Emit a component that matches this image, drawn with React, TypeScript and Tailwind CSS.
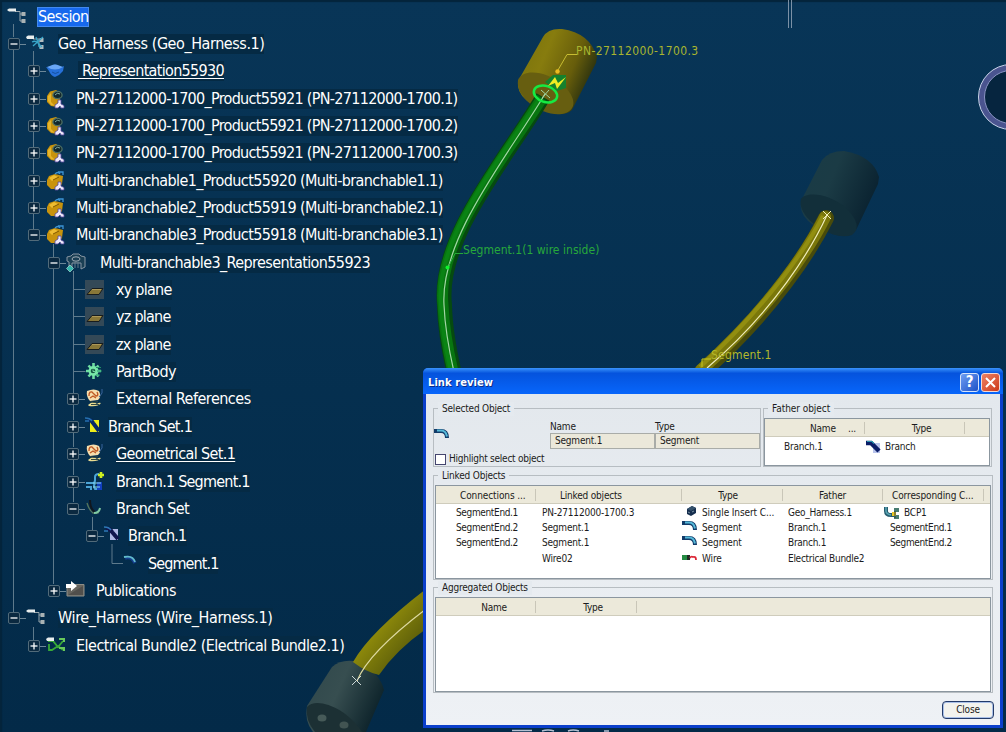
import React from "react";

type IconName =
  | "root" | "harness" | "rep" | "connector" | "multi" | "part" | "plane" | "gear"
  | "geo" | "branchset" | "bundleSegment" | "branchCurve" | "branch" | "segment" | "publication" | "electrical";

function TreeIcon({ name }: { name: IconName }) {
  const svg = (children: React.ReactNode) => (
    <svg width="20" height="20" viewBox="0 0 20 20" className="shrink-0" fill="none">{children}</svg>
  );
  switch (name) {
    case "root":
      return svg(<><path d="M8 4.500h5v9.500h3M13 7h3" stroke="#9aa8ae" /><path d="M0 3l2-1.500h7v3H2z" fill="#e9eeee" /><path d="M14.500 5h4v4h-4zM14.500 12h4v4h-4z" fill="#a9b2b4" /></>);
    case "harness":
      return svg(<><path d="M7 5h6v8h3M13 6h3" stroke="#8ba3ad" /><path d="M0 3l2-1.500h6v3.500H1z" fill="#e9eeee" /><path d="M13.500 4h4v4h-4zM13.500 11h4v4h-4z" fill="#b4bcbe" /><path d="M6 8c4-2 5 0 10 5M7 12l10-9M10 3l4 11" stroke="#38a5c8" strokeWidth="1.300" /></>);
    case "rep":
      return svg(<><path d="M0 6q4 1 5-1 4-3 8 0 2 2 5 0l-1 5q-3 4-8 6-4-1-6-6z" fill="#2670d9" /><path d="M1 6q8 5 16 0l-4-1.500q-4-2-8 0z" fill="#6aa7f6" /><path d="M6 11q3 3 7 0" stroke="#15509f" /></>);
    case "connector":
      return svg(<><path d="M10 1L4 2.500 1 7v6l4 4 6 1 3-4V4z" fill="#c8930d" /><path d="M2 7l3-3v9l4 4-4-1-3-4z" fill="#e5b52d" /><ellipse cx="11.500" cy="6" rx="4.600" ry="3.600" fill="#12272c" stroke="#4d6f64" strokeWidth="1.300" /><path d="M9 6q2-3 5-1" stroke="#80ada2" /><path d="M12 11h3v4l3 1.500V19h-3l-1-2-2 2H9v-3l3-2z" fill="#eee9fa" stroke="#54489b" strokeWidth=".8" /></>);
    case "multi":
      return svg(<><path d="M9 3L3 5 1 9v5l4 4 7 0 4-5 1-8z" fill="#c8930d" /><path d="M3 7l5-3 4 2-6 4z" fill="#efbd31" /><path d="M7 9l6-3" stroke="#825900" /><path d="M9 3q3-3 5 0M12 1h5v3" stroke="#3d94d5" strokeWidth="1.300" /><path d="M12 11h3v4l3 1.500V19h-3l-1-2-2 2H9v-3l3-2z" fill="#eee9fa" stroke="#54489b" strokeWidth=".8" /></>);
    case "part":
      return svg(<><path d="M1 4l4-1 2-2h6l2 2 4 1v10l-4 2v-6H6v5l-3 1V9L1 8z" fill="#1a3f54" stroke="#8796a2" /><ellipse cx="10" cy="6" rx="4" ry="2.200" stroke="#a1adb7" /><path d="M9 9v6M12 9v6" stroke="#657d8b" /><path d="M4 12l3.500 3.500L4 19 .500 15.500z" fill="#35b6ad" stroke="#b6eee1" strokeWidth=".6" /></>);
    case "plane":
      return svg(<><path d="M0 0h19v19H0z" fill="#344957" /><path d="M2 14.500l5-6h11l-4 6z" fill="#897738" stroke="#171c1e" /><path d="M7 9.500h9" stroke="#b8a160" strokeWidth=".8" /></>);
    case "gear":
      return svg(<><g stroke="#6edda2" strokeWidth="2.600"><path d="M8.500 1v16M1 9h15M3.500 3.500l10 11M3.500 14.500l10-11" /></g><circle cx="8.500" cy="9" r="5" fill="#77e7a8" /><circle cx="8" cy="9" r="2.300" fill="#125642" /><path d="M8 7.500v2h2" stroke="#8bf0b5" strokeWidth=".8" /><path d="M11 5.500h5M12 9h5M11 13h4" stroke="#1f9066" /></>);
    case "geo":
      return svg(<><path d="M2 2q7-3 12 0 3 6-1 9l-8 1Q1 8 2 2z" fill="#f7dfae" /><path d="M4 7q0-5 3-4l4 4q3 0 1-4M5 9l3-2 3 2" stroke="#bf5b25" strokeWidth="1.400" /><path d="M3 16q5-5 9-1 2-2 4-1-3 4-12 3z" fill="#e9db91" /><path d="M5 12.500q4 2 8 0M6 15.500h8" stroke="#354a42" /><path d="M17 0v4q-2 3-3 4" stroke="#38659d" /></>);
    case "branchset":
      return svg(<><path d="M5 3h9v12H5z" fill="#f0ee1a" /><path d="M2 3q4-1 6 3l6 8" stroke="#082a66" strokeWidth="4" /><path d="M0 1q5 0 7 3M0 4h4" stroke="#256fae" strokeWidth="1.600" /></>);
    case "bundleSegment":
      return svg(<><path d="M1 11h7q2 0 2-3V5q0-3 4-3M1 15h5v3M10 11q-2 3 0 6h5v-7" stroke="#4ba4d6" strokeWidth="2" /><path d="M12 10h5v8h-5z" fill="#123fc0" /><path d="M8 11h8M8 15h7" stroke="#8ddaed" /><path d="M16 0v6M13 3h6" stroke="#cfef20" strokeWidth="2.600" /></>);
    case "branchCurve":
      return svg(<><path d="M2 4q2 7 6 10h5l2-4" stroke="#54755d" strokeWidth="1.300" /><path d="M5 1q0 9 5 12" stroke="#10171e" strokeWidth="2" /><path d="M9 14q5 0 6-5" stroke="#7ec9a3" strokeWidth="2" /></>);
    case "branch":
      return svg(<><path d="M6 3h8v11H6z" fill="#aeb7e4" /><path d="M2 3q4-1 6 3l6 7" stroke="#10154e" strokeWidth="4" /><path d="M0 1q5 0 7 3M0 5h4" stroke="#2e77b5" strokeWidth="1.600" /></>);
    case "segment":
      return svg(<><path d="M2 4q7-2 10 5" stroke="#153e8e" strokeWidth="3.500" /><path d="M1 3q9-2 11 5" stroke="#62bbcb" strokeWidth="1.800" /></>);
    case "publication":
      return svg(<><path d="M1 3.500h17v11.500H1z" fill="#66645e" stroke="#8f8e87" /><path d="M2 14L17 5v9z" fill="#514f4c" /><path d="M0 3h5V0l6 5-6 5V7H0z" fill="#fff" /></>);
    case "electrical":
      return svg(<><path d="M2 5h5l5 6 5-6M3 8v6h3l6-4 5 4" stroke="#38a938" strokeWidth="1.800" /><path d="M0 3l2-1.500h6v3.500H1z" fill="#e9eeee" /><path d="M13 3h5v3M13 12h5v3" stroke="#68c85b" strokeWidth="2" /></>);
  }
}

type Row = { text: string; icon: IconName; pad: string; gap: string; track: string; state?: "+" | "-"; link?: boolean };

const L1 = "pl-[8px]", L2 = "pl-[28px]", L3 = "pl-[48px]", L4 = "pl-[67px]", L5 = "pl-[86px]", L6 = "pl-[105px]";

const rows: Row[] = [
  { text: "Geo_Harness (Geo_Harness.1)", icon: "harness", pad: L1, gap: "ml-[12px]", track: "tracking-[-0.43px]", state: "-" },
  { text: "\u00a0Representation55930", icon: "rep", pad: L2, gap: "ml-[12px]", track: "tracking-[-0.68px]", state: "+", link: true },
  { text: "PN-27112000-1700_Product55921 (PN-27112000-1700.1)", icon: "connector", pad: L2, gap: "ml-[10px]", track: "tracking-[-0.7px]", state: "+" },
  { text: "PN-27112000-1700_Product55921 (PN-27112000-1700.2)", icon: "connector", pad: L2, gap: "ml-[10px]", track: "tracking-[-0.7px]", state: "+" },
  { text: "PN-27112000-1700_Product55921 (PN-27112000-1700.3)", icon: "connector", pad: L2, gap: "ml-[10px]", track: "tracking-[-0.7px]", state: "+" },
  { text: "Multi-branchable1_Product55920 (Multi-branchable1.1)", icon: "multi", pad: L2, gap: "ml-[10px]", track: "tracking-[-0.6px]", state: "+" },
  { text: "Multi-branchable2_Product55919 (Multi-branchable2.1)", icon: "multi", pad: L2, gap: "ml-[10px]", track: "tracking-[-0.6px]", state: "+" },
  { text: "Multi-branchable3_Product55918 (Multi-branchable3.1)", icon: "multi", pad: L2, gap: "ml-[10px]", track: "tracking-[-0.6px]", state: "-" },
  { text: "Multi-branchable3_Representation55923", icon: "part", pad: L3, gap: "ml-[14px]", track: "tracking-[-0.61px]", state: "-" },
  { text: "xy plane", icon: "plane", pad: L4, gap: "ml-[11px]", track: "tracking-[-0.75px]" },
  { text: "yz plane", icon: "plane", pad: L4, gap: "ml-[11px]", track: "tracking-[-0.75px]" },
  { text: "zx plane", icon: "plane", pad: L4, gap: "ml-[11px]", track: "tracking-[-0.75px]" },
  { text: "PartBody", icon: "gear", pad: L4, gap: "ml-[11px]", track: "tracking-[-0.6px]" },
  { text: "External References", icon: "geo", pad: L4, gap: "ml-[11px]", track: "tracking-[-0.5px]", state: "+" },
  { text: "Branch Set.1", icon: "branchset", pad: L4, gap: "ml-[3px]", track: "tracking-[-0.72px]", state: "+" },
  { text: "Geometrical Set.1", icon: "geo", pad: L4, gap: "ml-[11px]", track: "tracking-[-0.63px]", state: "+", link: true },
  { text: "Branch.1 Segment.1", icon: "bundleSegment", pad: L4, gap: "ml-[11px]", track: "tracking-[-0.77px]", state: "+" },
  { text: "Branch Set", icon: "branchCurve", pad: L4, gap: "ml-[11px]", track: "tracking-[-0.6px]", state: "-" },
  { text: "Branch.1", icon: "branch", pad: L5, gap: "ml-[4px]", track: "tracking-[-0.75px]", state: "-" },
  { text: "Segment.1", icon: "segment", pad: L6, gap: "ml-[5px]", track: "tracking-[-0.9px]" },
  { text: "Publications", icon: "publication", pad: L3, gap: "ml-[10px]", track: "tracking-[-0.55px]", state: "+" },
  { text: "Wire_Harness (Wire_Harness.1)", icon: "root", pad: L1, gap: "ml-[12px]", track: "tracking-[-0.36px]", state: "-" },
  { text: "Electrical Bundle2 (Electrical Bundle2.1)", icon: "electrical", pad: L2, gap: "ml-[10px]", track: "tracking-[-0.52px]", state: "+" },
];

function Expander({ state }: { state?: "+" | "-" }) {
  return (
    <svg width="18" height="20" viewBox="0 0 18 20" className="shrink-0" fill="none">
      {state && (
        <>
          <rect x=".5" y="4.500" width="11" height="11" rx="1.500" fill="#0b2940" stroke="#526b7a" />
          <path d="M2.500 10h7" stroke="#fff" strokeWidth="1.300" />
          {state === "+" && <path d="M6 6.500v7" stroke="#fff" strokeWidth="1.300" />}
          <path d="M12 10.500h6" stroke="#6c8798" />
        </>
      )}
    </svg>
  );
}

function Tree() {
  return (
    <div className="absolute left-0 top-0 w-[480px] pt-[3px] text-[16px] leading-[20px] text-white">
      <svg width="480" height="732" className="absolute left-0 top-0" stroke="#5e7a8c" fill="none">
        <path d="M13.500 24v13M13.500 49v564M33.500 51v14M33.500 77v15M33.500 105v15M33.500 132v15M33.500 159v15M33.500 187v15M33.500 214v15M53.500 244v13M53.500 269v315M33.500 627v13M92.500 517v14" />
        <path d="M73.500 271v122M73.500 405v15M73.500 433v14M73.500 460v15M73.500 487v15M73.500 289.500h12M73.500 316.500h12M73.500 344.500h12M73.500 371.500h12M112 544v19.500h11" />
      </svg>
      <div className="relative flex h-[27.35px] items-center pl-[7px]">
        <TreeIcon name="root" />
        <span className="ml-[11px] bg-[#1769ed] leading-[18px] tracking-[-0.65px] shadow-[0_0_0_1px_#4389ef]">Session</span>
      </div>
      {rows.map((r, i) => (
        <div key={i} className={`relative flex h-[27.35px] items-center whitespace-pre ${r.pad}`}>
          <Expander state={r.state} />
          <TreeIcon name={r.icon} />
          <span className={`bg-[#052a44] ${r.gap} ${r.track} ${r.link ? "underline decoration-1 underline-offset-2" : ""}`}>{r.text}</span>
        </div>
      ))}
    </div>
  );
}

function Scene() {
  return (
    <svg width="1006" height="732" className="absolute left-0 top-0" fill="none">
      <defs>
        <linearGradient id="gold" x1="0" y1="0" x2="1" y2=".45"><stop stopColor="#77700c" /><stop offset=".4" stopColor="#877c0e" /><stop offset=".75" stopColor="#675d0b" /><stop offset="1" stopColor="#2a310f" /></linearGradient>
        <linearGradient id="slate" x1="0" y1="0" x2="1" y2=".45"><stop stopColor="#193b46" /><stop offset=".45" stopColor="#1b3b45" /><stop offset="1" stopColor="#0a2230" /></linearGradient>
        <linearGradient id="slate2" x1="0" y1="0" x2="1" y2=".4"><stop stopColor="#2f474b" /><stop offset=".5" stopColor="#374e50" /><stop offset="1" stopColor="#10262d" /></linearGradient>
        <linearGradient id="tube" x1="0" y1="0" x2="1" y2="1"><stop stopColor="#6e6d0b" /><stop offset=".4" stopColor="#8d890b" /><stop offset="1" stopColor="#3b4009" /></linearGradient>
      </defs>
      <path d="M788.500 0v28M791.500 0v28" stroke="#7b91a6" />
      <circle cx="1011" cy="97" r="29.500" fill="#06253f" stroke="#4a548f" strokeWidth="6" />
      <circle cx="1011" cy="97" r="32.500" stroke="#c7d3e8" />
      <circle cx="1011" cy="97" r="26.500" stroke="#8b94c4" />

      <path d="M518 81L543 37Q548 28 562 29Q590 33 597 57L596 63L574 106Q571 115 558 114Q515 103 518 81z" fill="url(#gold)" />
      <path d="M518 80C523 68 547 71 563 85C577 98 577 111 562 114C543 117 515 98 518 80z" fill="#675e10" />
      <path d="M545 82l8-7h13v13l-9 3z" fill="#15802d" />
      <path d="M543 97C507 158 437 238 444.500 305C445 330 449 350 454 372" stroke="#064a10" strokeWidth="15" />
      <path d="M542 98C505 158 436 238 443 305C444 330 448 350 453 372" stroke="#087510" strokeWidth="11" />
      <path d="M540 98C502 158 434 238 441 305C442 330 446 350 451 372" stroke="#0a8314" strokeWidth="4" />
      <path d="M545 94C508 156 440 238 444 305C445 330 449 350 454 372" stroke="#a1d7a4" strokeWidth="1.200" />
      <ellipse cx="545.500" cy="94" rx="12" ry="8" transform="rotate(18 545.500 94)" stroke="#16ea42" strokeWidth="2.500" />
      <path d="M541 90l9 8M549 90l-7 8" stroke="#a0d5a0" />
      <path d="M548 86l7-9 3 6 8-6-9 12-2-6z" fill="#efed24" />
      <path d="M577 54.500h-10L558 70" stroke="#c8bd32" /><circle cx="557.500" cy="71.500" r="2.200" fill="#ebbb20" />
      <path d="M463 253.500h-8l-7 14" stroke="#27a83a" /><circle cx="447.500" cy="267.500" r="2" fill="#0ff52e" />

      <path d="M801 201L822 160Q829 151 844 151Q873 156 879 177L878 184L857 228Q851 239 836 235Q797 223 801 201z" fill="url(#slate)" />
      <path d="M801 199C806 191 829 193 846 208C858 220 860 229 852 235C832 242 796 217 801 199z" fill="#122f3a" />
      <path d="M826 218C811 248 774 308 702 372" stroke="#484b0b" strokeWidth="16" strokeLinecap="round" />
      <path d="M825 217C810 247 772 306 701 370" stroke="#7a770a" strokeWidth="12" strokeLinecap="round" />
      <path d="M823 216C808 245 769 304 700 367" stroke="#928e10" strokeWidth="4" />
      <path d="M827 215C812 248 775 310 707 368" stroke="#f0edbb" strokeWidth="1.200" />
      <path d="M823 211l8 8M831 211l-8 8" stroke="#f2efb7" />
      <path d="M711 359h-9v8" stroke="#c7c91e" />

      <path d="M307 706L332 667Q342 658 359 662Q380 673 384 690L366 732H313Q304 721 307 706z" fill="url(#slate2)" />
      <path d="M307 707C316 696 347 708 362 732H315Q305 720 307 707z" fill="#1c3034" />
      <ellipse cx="322" cy="718" rx="4.500" ry="3.500" fill="#465a58" /><ellipse cx="344" cy="725" rx="4.500" ry="3.500" fill="#425452" />
      <path d="M353 662Q370 632 426 589V629Q396 650 379 675Q366 672 353 662z" fill="url(#tube)" />
      <path d="M357 681Q368 653 426 609" stroke="#ddd9a0" strokeWidth="1.200" />
      <path d="M352 676l9 9M361 676l-9 9" stroke="#cdd9d7" />
      <path d="M512 730.500h20M542 731q6-2 12 0M568 731q5-2 11 0M604 731h5" stroke="#b4c0d2" strokeWidth="1.500" />
    </svg>
  );
}

function Bend() {
  return (
    <svg width="16" height="12" viewBox="0 0 16 12" className="shrink-0" fill="none">
      <path d="M0 3h7q6 0 6 7" stroke="#123b69" strokeWidth="4" />
      <path d="M3 2.500h4q5 0 6 6" stroke="#55b9d9" strokeWidth="2" />
    </svg>
  );
}

function Block() {
  return (
    <svg width="16" height="12" viewBox="0 0 16 12" className="shrink-0">
      <path d="M5 4l5-3 4 2v5l-5 3-4-2z" fill="#162e4e" /><path d="M5 4l5-3 4 2-5 3z" fill="#35526c" /><path d="M6 7l2 1M10 7l2-1" stroke="#7c94a5" />
    </svg>
  );
}

function WireIcon() {
  return (
    <svg width="16" height="12" viewBox="0 0 16 12" className="shrink-0" fill="none">
      <path d="M0 4h6v5H0z" fill="#248b43" /><path d="M5 4h3v5H5z" fill="#1e2b25" /><path d="M8 7q1-2 3-1 3-1 3 3" stroke="#db2837" strokeWidth="1.800" />
    </svg>
  );
}

function BranchPoint() {
  return (
    <svg width="16" height="14" viewBox="0 0 16 14" className="shrink-0" fill="none">
      <path d="M2 1v4q0 4 5 4h3" stroke="#275d70" strokeWidth="4" /><path d="M2 1v4q0 3 5 4" stroke="#5aa6b4" strokeWidth="1.500" /><path d="M10 2h5v4h-5zM10 9h5v4h-5z" fill="#487c70" /><path d="M8 6h4v4H8z" fill="#eac626" /><path d="M11 5v7" stroke="#263d42" />
    </svg>
  );
}

function BranchTube() {
  return (
    <svg width="16" height="14" viewBox="0 0 16 14" className="shrink-0" fill="none">
      <path d="M7 3h7v10H7z" fill="#b9c4ec" /><path d="M0 3h5l8 8" stroke="#0a1c67" strokeWidth="4.500" /><path d="M1 1.500h5l2 2" stroke="#2999b0" strokeWidth="1.200" />
    </svg>
  );
}

function Group({ title, className, legend, children }: { title: string; className: string; legend?: string; children: React.ReactNode }) {
  return (
    <section className={`flex flex-col border border-[#b7bdc2] ${className}`}>
      <div className={`-mt-[7px] h-[14px] w-fit shrink-0 bg-[#e5eaef] leading-[13px] ${legend ?? "ml-[4px] px-[4px]"}`}>{title}</div>
      {children}
    </section>
  );
}

function Head({ className, children }: { className: string; children?: React.ReactNode }) {
  return <div className={`my-[3px] h-[12px] shrink-0 border-r border-[#c9c6b8] leading-[13px] ${className}`}>{children}</div>;
}

const linked: { end: string; obj: string; icon: React.ReactNode; type: string; father: string; match: string; point?: boolean }[] = [
  { end: "SegmentEnd.1", obj: "PN-27112000-1700.3", icon: <Block />, type: "Single Insert C...", father: "Geo_Harness.1", match: "BCP1", point: true },
  { end: "SegmentEnd.2", obj: "Segment.1", icon: <Bend />, type: "Segment", father: "Branch.1", match: "SegmentEnd.1" },
  { end: "SegmentEnd.2", obj: "Segment.1", icon: <Bend />, type: "Segment", father: "Branch.1", match: "SegmentEnd.2" },
  { end: "", obj: "Wire02", icon: <WireIcon />, type: "Wire", father: "Electrical Bundle2", match: "" },
];

function Dialog() {
  return (
    <div className="absolute left-[423px] top-[368px] flex h-[360px] w-[580px] flex-col overflow-hidden rounded-t-[5px] bg-[#0b3fcb] text-[10px] leading-[14px] tracking-[-0.2px] text-[#1b1b20]">
      <header className="flex h-[26px] shrink-0 items-center bg-linear-to-b from-[#3a92fb] via-[#0553dd] via-20% to-[#0866fb] pl-[5px] pr-[3px] pt-[2px]">
        <h1 className="flex-1 pt-px text-[11px] font-bold tracking-[0.08px] text-white [text-shadow:1px_1px_#0b2c87]">Link review</h1>
        <button className="mr-[2px] flex size-[19px] items-center justify-center rounded-[3px] border border-[#d6e3fa] bg-linear-to-br from-[#6e9df2] to-[#1d50c7] text-[15px] font-bold text-white">?</button>
        <button className="flex size-[19px] items-center justify-center rounded-[3px] border border-[#f4d9d3] bg-linear-to-br from-[#ed8264] to-[#cc3613]">
          <svg width="11" height="11" viewBox="0 0 11 11" stroke="#fff" strokeWidth="2"><path d="M1 1l9 9M10 1l-9 9" /></svg>
        </button>
      </header>
      <main className="mx-[3px] mb-[3px] flex flex-1 flex-col whitespace-nowrap bg-linear-to-b from-[#e3e8ed] to-[#eef1f5] pl-[7px] pr-[8px] pt-[14px]">
        <div className="flex h-[59px] gap-[2px]">
          <Group title="Selected Object" className="w-[328px]">
            <div className="flex h-[35px] items-end">
              <div className="flex w-[116px] pb-[9px]"><Bend /></div>
              <div className="w-[105px]">
                <div className="h-[13px] leading-[14px]">Name</div>
                <div className="h-[16px] border border-[#a9aca8] bg-[#ebe8da] pl-[4px] leading-[14px]">Segment.1</div>
              </div>
              <div className="w-[105px]">
                <div className="h-[13px] leading-[14px]">Type</div>
                <div className="h-[16px] border border-[#a9aca8] bg-[#ebe8da] pl-[4px] leading-[14px]">Segment</div>
              </div>
            </div>
            <label className="flex items-center pl-[1px] pt-[3px] tracking-[-0.24px]">
              <span className="mr-[3px] size-[11px] border border-[#44456e] bg-white" />
              Highlight select object
            </label>
          </Group>
          <Group title="Father object" className="w-[230px]" legend="ml-[4px] px-[4px] tracking-[-0.05px]">
            <div className="mr-px mt-[2px] flex-1 border border-[#8b969f] bg-white">
              <div className="flex h-[18px] border-b border-[#cfccbc] bg-[#ece9da]">
                <Head className="flex w-[100px] pl-[45px]"><span className="w-[38px]">Name</span>...</Head>
                <Head className="w-[100px] pl-[14px] text-center">Type</Head>
              </div>
              <div className="flex h-[19px] items-center">
                <span className="w-[101px] pl-[19px]">Branch.1</span>
                <BranchTube />
                <span className="pl-[3px]">Branch</span>
              </div>
            </div>
          </Group>
        </div>
        <Group title="Linked Objects" className="mt-[8px] h-[105px] w-[560px]">
          <div className="mx-px mt-[2px] flex-1 border border-[#8b969f] bg-white">
            <div className="mb-px flex h-[18px] border-b border-[#cfccbc] bg-[#ece9da]">
              <Head className="w-[100px] pl-[24px] tracking-[-0.1px]">Connections ...</Head>
              <Head className="w-[146px] pl-[24px]">Linked objects</Head>
              <Head className="w-[101px] pr-[8px] text-center">Type</Head>
              <Head className="w-[100px] text-center">Father</Head>
              <Head className="w-[101px] pl-[9px] tracking-[-0.1px]">Corresponding C...</Head>
            </div>
            {linked.map((r, i) => (
              <div key={i} className="flex h-[15.4px] items-center">
                <span className="w-[106px] pl-[20px] tracking-[-0.35px]">{r.end}</span>
                <span className="w-[140px]">{r.obj}</span>
                <span className="-mt-[4px]">{r.icon}</span>
                <span className="w-[90px] pl-[4px] tracking-[-0.1px]">{r.type}</span>
                <span className="w-[96px] tracking-[-0.28px]">{r.father}</span>
                {r.point && <BranchPoint />}
                <span className={r.point ? "pl-[4px]" : "pl-[6px] tracking-[-0.35px]"}>{r.match}</span>
              </div>
            ))}
          </div>
        </Group>
        <Group title="Aggregated Objects" className="mt-[7px] h-[106px] w-[560px]">
          <div className="mx-px mt-[2px] flex-1 border border-[#8b969f] bg-white">
            <div className="flex h-[18px] border-b border-[#cfccbc] bg-[#ece9da]">
              <Head className="w-[100px] pl-[17px] text-center">Name</Head>
              <Head className="w-[101px] pl-[14px] text-center">Type</Head>
            </div>
          </div>
        </Group>
        <button className="-mr-[2px] mt-[8px] h-[18px] w-[52px] self-end rounded-[4px] border border-[#243b69] bg-[#f3f3ee] leading-[16px] shadow-[inset_0_0_0_1px_#aac0e8]">Close</button>
      </main>
    </div>
  );
}

export default function App() {
  return (
    <div className="relative h-[732px] w-[1006px] overflow-hidden bg-linear-to-b from-[#083557] to-[#032a48] font-['DejaVu_Sans_Condensed','DejaVu_Sans',sans-serif] [font-stretch:condensed] shadow-[inset_2px_2px_1px_#04243b]">
      <Scene />
      <Tree />
      <span className="absolute left-[576px] top-[43px] whitespace-nowrap text-[12px] leading-[16px] tracking-[0.42px] text-[#a9b52f]">PN-27112000-1700.3</span>
      <span className="absolute left-[463px] top-[242px] whitespace-nowrap text-[12px] leading-[16px] tracking-[0.03px] text-[#26a83b]">Segment.1(1 wire inside)</span>
      <span className="absolute left-[711px] top-[347px] whitespace-nowrap text-[12px] leading-[16px] tracking-[0.2px] text-[#b4b82b]">Segment.1</span>
      <Dialog />
    </div>
  );
}
